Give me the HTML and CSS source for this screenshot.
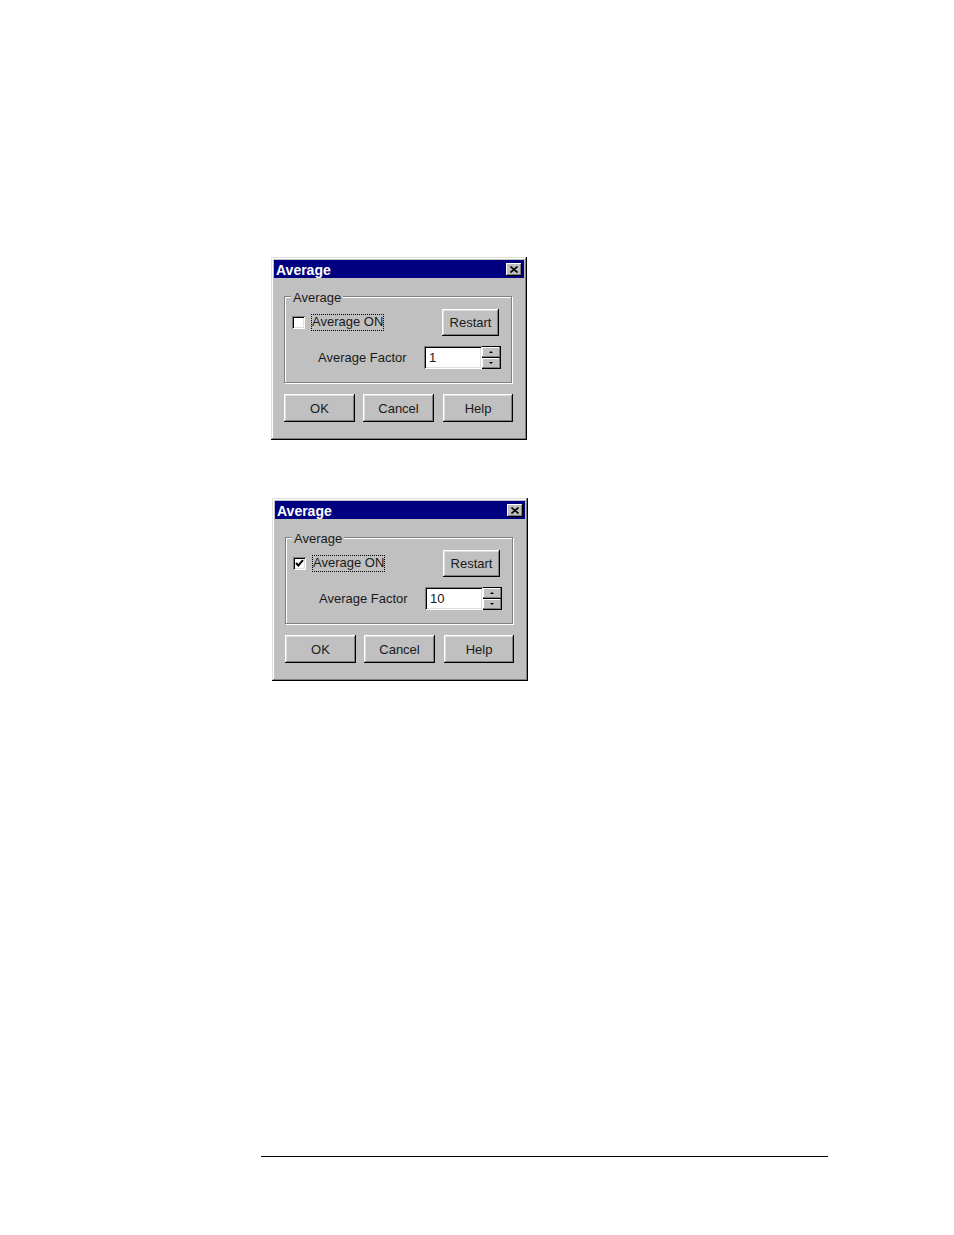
FILE: index.html
```html
<!DOCTYPE html>
<html>
<head>
<meta charset="utf-8">
<link rel="stylesheet" href="styles.css">
</head>
<body>
<div class="page">
  <div class="dialog">
    <div class="titlebar">
      <span class="title">Average</span>
      <span class="close"><svg width="8" height="7" viewBox="0 0 8 7"><path d="M0.5 0.5 L7.5 6.5 M7.5 0.5 L0.5 6.5" stroke="#000" stroke-width="1.6" fill="none"/></svg></span>
    </div>
    <fieldset class="group">
      <legend class="legend">Average</legend>
      <div class="row row-top">
        <span class="check"></span>
        <span class="check-label">Average ON</span>
        <span class="btn btn-restart">Restart</span>
      </div>
      <div class="row row-factor">
        <span class="factor-label">Average Factor</span>
        <span class="field">1</span>
        <span class="spin">
          <span class="spin-btn"><span class="tri-up"></span></span>
          <span class="spin-btn"><span class="tri-down"></span></span>
        </span>
      </div>
    </fieldset>
    <div class="buttons">
      <span class="btn btn-main">OK</span>
      <span class="btn btn-main">Cancel</span>
      <span class="btn btn-main btn-last">Help</span>
    </div>
  </div>

  <div class="dialog dialog-second">
    <div class="titlebar">
      <span class="title">Average</span>
      <span class="close"><svg width="8" height="7" viewBox="0 0 8 7"><path d="M0.5 0.5 L7.5 6.5 M7.5 0.5 L0.5 6.5" stroke="#000" stroke-width="1.6" fill="none"/></svg></span>
    </div>
    <fieldset class="group">
      <legend class="legend">Average</legend>
      <div class="row row-top">
        <span class="check"><svg width="9" height="9" viewBox="0 0 9 9"><path d="M1 4 L3.3 6.5 L8 1.2" stroke="#000" stroke-width="2" fill="none"/></svg></span>
        <span class="check-label">Average ON</span>
        <span class="btn btn-restart">Restart</span>
      </div>
      <div class="row row-factor">
        <span class="factor-label">Average Factor</span>
        <span class="field">10</span>
        <span class="spin">
          <span class="spin-btn"><span class="tri-up"></span></span>
          <span class="spin-btn"><span class="tri-down"></span></span>
        </span>
      </div>
    </fieldset>
    <div class="buttons">
      <span class="btn btn-main">OK</span>
      <span class="btn btn-main">Cancel</span>
      <span class="btn btn-main btn-last">Help</span>
    </div>
  </div>

  <div class="rule"></div>
</div>
</body>
</html>
```

FILE: styles.css
```css
html, body {
  margin: 0;
  padding: 0;
  background: #ffffff;
}

body {
  font-family: "Liberation Sans", Arial, sans-serif;
  font-size: 13px;
  color: #1a1a1a;
}

.page {
  padding-top: 257px;
  height: 1235px;
  box-sizing: border-box;
}

.dialog {
  margin-left: 271px;
  width: 256px;
  box-sizing: border-box;
  padding: 3px 3px 18px 3px;
  background: #c0c0c0;
  box-shadow: inset -1px -1px 0 #000, inset 1px 1px 0 #dfdfdf,
              inset -2px -2px 0 #808080, inset 2px 2px 0 #fff;
}

.dialog-second {
  margin-left: 272px;
  margin-top: 58px;
}

.titlebar {
  height: 18px;
  background: #000080;
  display: flex;
  align-items: center;
  justify-content: space-between;
  padding-left: 2px;
}

.title {
  color: #fff;
  font-weight: bold;
  font-size: 14px;
  line-height: 18px;
  padding-top: 1px;
}

.close {
  width: 16px;
  height: 13px;
  margin-right: 2px;
  background: #c0c0c0;
  display: flex;
  align-items: center;
  justify-content: center;
  box-shadow: inset -1px -1px 0 #000, inset 1px 1px 0 #fff,
              inset -2px -2px 0 #808080;
}

.group {
  margin: 10px 0 0 10px;
  padding: 0 0 13px 0;
  width: 228px;
  box-sizing: border-box;
  border: 1px solid #808080;
  box-shadow: inset 1px 1px 0 #fff, 1px 1px 0 #fff;
  min-width: 0;
}

.legend {
  margin-left: 6px;
  padding: 3px 2px 0 2px;
  line-height: 13px;
  background: #c0c0c0;
}

.row {
  display: flex;
  align-items: center;
}

.row-top {
  margin-top: 5px;
  height: 27px;
}

.check {
  margin-left: 7px;
  width: 13px;
  height: 13px;
  box-sizing: border-box;
  background: #fff;
  box-shadow: inset 1px 1px 0 #808080, inset -1px -1px 0 #fff,
              inset 2px 2px 0 #000, inset -2px -2px 0 #dfdfdf;
  display: flex;
  align-items: center;
  justify-content: center;
  margin-top: -1px;
}

.check-label {
  margin-left: 6px;
  padding: 1px 1px 2px 1px;
  outline: 1px dotted #000;
  outline-offset: -1px;
  line-height: 14px;
}

.btn {
  display: flex;
  align-items: center;
  justify-content: center;
  background: #c0c0c0;
  box-shadow: inset -1px -1px 0 #000, inset 1px 1px 0 #fff,
              inset -2px -2px 0 #808080, inset 2px 2px 0 #dfdfdf;
  box-sizing: border-box;
}

.btn-restart {
  margin-left: auto;
  margin-right: 12px;
  width: 57px;
  height: 27px;
}

.row-factor {
  margin-top: 10px;
  height: 23px;
}

.factor-label {
  margin-left: 33px;
  width: 106px;
}

.field {
  width: 58px;
  height: 23px;
  box-sizing: border-box;
  background: #fff;
  padding: 0 0 0 5px;
  line-height: 23px;
  box-shadow: inset 1px 1px 0 #808080, inset -1px -1px 0 #fff,
              inset 2px 2px 0 #000, inset -2px -2px 0 #dfdfdf;
}

.spin {
  width: 19px;
  height: 23px;
  box-sizing: border-box;
  display: flex;
  flex-direction: column;
  background: #000;
  padding: 1px 1px 1px 0;
  gap: 1px;
}

.spin-btn {
  flex: 1;
  background: #c0c0c0;
  display: flex;
  align-items: center;
  justify-content: center;
  box-shadow: inset -1px -1px 0 #808080, inset 1px 1px 0 #fff;
}

.tri-up {
  width: 0;
  height: 0;
  border-left: 2px solid transparent;
  border-right: 2px solid transparent;
  border-bottom: 2px solid #000;
}

.tri-down {
  width: 0;
  height: 0;
  border-left: 2px solid transparent;
  border-right: 2px solid transparent;
  border-top: 2px solid #000;
}

.buttons {
  display: flex;
  margin: 11px 0 0 10px;
  gap: 8px;
}

.btn-main {
  width: 71px;
  height: 28px;
}

.btn-last {
  margin-left: 1px;
  width: 70px;
}

.rule {
  margin: 475px 0 0 261px;
  width: 567px;
  border-top: 1px solid #000;
}
```
